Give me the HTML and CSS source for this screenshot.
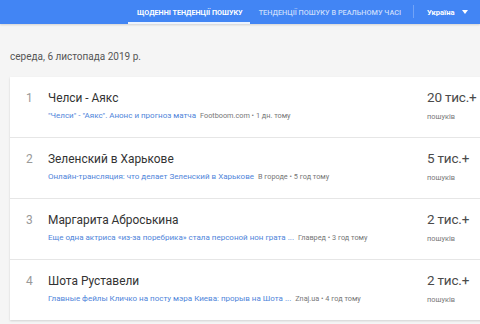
FILE: index.html
```html
<!DOCTYPE html>
<html lang="uk">
<head>
<meta charset="utf-8">
<link rel="stylesheet" href="styles.css">
</head>
<body>
<header class="topbar">
  <nav class="tabs">
    <div class="tab tab-active">Щоденні тенденції пошуку</div>
    <div class="tab">Тенденції пошуку в реальному часі</div>
  </nav>
  <div class="divider"></div>
  <div class="locale"><span>Україна</span><span class="caret"></span></div>
</header>
<main class="content">
  <div class="date">середа, 6 листопада 2019 р.</div>
  <section class="card">
    <div class="row">
      <div class="num">1</div>
      <div class="info">
        <div class="title">Челси - Аякс</div>
        <div class="sub"><span class="link">"Челси" - "Аякс". Анонс и прогноз матча</span> <span class="src">Footboom.com • 1 дн. тому</span></div>
      </div>
      <div class="stats">
        <div class="count">20 тис.+</div>
        <div class="label">пошуків</div>
      </div>
    </div>
    <div class="row">
      <div class="num">2</div>
      <div class="info">
        <div class="title">Зеленский в Харькове</div>
        <div class="sub"><span class="link">Онлайн-трансляция: что делает Зеленский в Харькове</span> <span class="src">В городе • 5 год тому</span></div>
      </div>
      <div class="stats">
        <div class="count">5 тис.+</div>
        <div class="label">пошуків</div>
      </div>
    </div>
    <div class="row">
      <div class="num">3</div>
      <div class="info">
        <div class="title">Маргарита Аброськина</div>
        <div class="sub"><span class="link">Еще одна актриса «из-за поребрика» стала персоной нон грата ...</span> <span class="src">Главред • 3 год тому</span></div>
      </div>
      <div class="stats">
        <div class="count">2 тис.+</div>
        <div class="label">пошуків</div>
      </div>
    </div>
    <div class="row">
      <div class="num">4</div>
      <div class="info">
        <div class="title">Шота Руставели</div>
        <div class="sub"><span class="link">Главные фейлы Кличко на посту мэра Киева: прорыв на Шота ...</span> <span class="src">Znaj.ua • 4 год тому</span></div>
      </div>
      <div class="stats">
        <div class="count">2 тис.+</div>
        <div class="label">пошуків</div>
      </div>
    </div>
  </section>
</main>
</body>
</html>
```
FILE: styles.css
```css
html, body {
  margin: 0;
  padding: 0;
}
body {
  width: 480px;
  height: 324px;
  overflow: hidden;
  background: #f5f5f5;
  font-family: Roboto, "Noto Sans", sans-serif;
}
.topbar {
  height: 24px;
  background: #4285f4;
  display: flex;
  align-items: stretch;
  padding-left: 128px;
  box-shadow: 0 1px 2px rgba(0,0,0,0.15);
  white-space: nowrap;
}
.tabs {
  display: flex;
  flex-shrink: 0;
}
.tab {
  display: flex;
  align-items: center;
  padding: 0 6px 0 9px;
  font-size: 7.3px;
  font-weight: 500;
  text-transform: uppercase;
  color: rgba(255,255,255,0.72);
  white-space: nowrap;
}
.tab-active {
  font-size: 7.2px;
  padding: 0 7px 0 9px;
  color: #fff;
  font-weight: 700;
  box-shadow: inset 0 -2px 0 rgba(255,255,255,0.9);
}
.divider {
  flex-shrink: 0;
  width: 1px;
  background: rgba(255,255,255,0.25);
  margin: 5px 0 6px 6px;
}
.locale {
  flex-shrink: 0;
  display: flex;
  align-items: center;
  padding-left: 13px;
  font-size: 7.6px;
  font-weight: 700;
  color: #fff;
}
.caret {
  width: 0;
  height: 0;
  border-left: 3px solid transparent;
  border-right: 3px solid transparent;
  border-top: 4px solid #fff;
  margin-left: 7px;
}
.content {
  padding: 27px 0 0 10px;
}
.date {
  font-size: 10px;
  color: #555;
  height: 12px;
  line-height: 12px;
}
.card {
  margin-top: 14px;
  width: 490px;
  background: #fff;
  box-shadow: 0 1px 2px rgba(0,0,0,0.15);
}
.row {
  display: flex;
  height: 60px;
  border-bottom: 1px solid #e6e6e6;
}
.row:last-child {
  border-bottom: none;
}
.num {
  flex-shrink: 0;
  width: 38px;
  padding-left: 16px;
  box-sizing: border-box;
  padding-top: 14px;
  font-size: 12px;
  color: #999;
}
.info {
  flex: 1;
  min-width: 0;
  padding-top: 13px;
}
.title {
  font-size: 11.9px;
  color: #333;
  line-height: 16px;
}
.sub {
  margin-top: 5px;
  font-size: 8px;
  line-height: 10px;
  white-space: nowrap;
}
.link {
  color: #4f85da;
}
.src {
  font-size: 7.3px;
  color: #777;
  margin-left: 2px;
}
.stats {
  flex-shrink: 0;
  width: 73px;
  padding-top: 11px;
}
.count {
  font-size: 13.5px;
  color: #4a4a4a;
  line-height: 18px;
  letter-spacing: -0.2px;
}
.label {
  margin-top: 6px;
  font-size: 7.4px;
  color: #777;
}
```
